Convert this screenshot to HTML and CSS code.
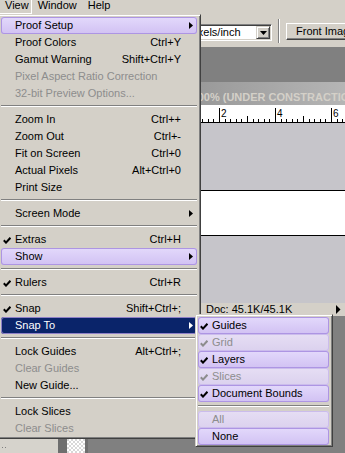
FILE: index.html
```html
<!DOCTYPE html>
<html lang="en">
<head>
  <meta charset="UTF-8" />
  <title>View menu – Snap To</title>
  <link rel="stylesheet" href="styles.css">
</head>
<body>
<div class="screen">

  <!-- ----------  MENU BAR  ---------- -->
  <div class="menubar">
    <span class="mb-item pressed">View</span>
    <span class="mb-item">Window</span>
    <span class="mb-item">Help</span>
  </div>

  <!-- ----------  OPTIONS BAR  ---------- -->
  <div class="options">
    <div class="field">
      <span class="field-text">Pixels/inch</span>
      <span class="drop"><svg width="7" height="4" viewBox="0 0 7 4"><polygon points="0,0 7,0 3.5,4" fill="#000"/></svg></span>
    </div>
    <div class="vsep"></div>
    <div class="btn">Front Image</div>
  </div>

  <!-- ----------  WORKSPACE + DOCUMENT  ---------- -->
  <div class="workspace">
    <div class="docwin">
      <div class="title">Untitled-1 @ 100% (UNDER CONSTRACTION, RGB/8)</div>
      <svg class="ruler" width="260" height="18" viewBox="0 0 260 18">
        <path stroke="#000" stroke-width="1" fill="none" shape-rendering="crispEdges"
          d="M0 17.5H260
             M43.5 3v14 M49.5 14v3 M54.5 14v3 M60.5 14v3 M65.5 14v3
             M71.5 11v6 M77.5 14v3 M82.5 14v3 M88.5 14v3 M93.5 14v3
             M99.5 3v14 M105.5 14v3 M110.5 14v3 M116.5 14v3 M121.5 14v3
             M127.5 11v6 M133.5 14v3 M138.5 14v3 M144.5 14v3 M149.5 14v3
             M155.5 3v14 M161.5 14v3 M166.5 14v3 M172.5 14v3 M177.5 14v3
             M183.5 11v6 M189.5 14v3 M194.5 14v3 M200.5 14v3 M205.5 14v3
             M211.5 3v14 M217.5 14v3 M222.5 14v3 M228.5 14v3 M233.5 14v3
             M239.5 11v6 M245.5 14v3 M250.5 14v3 M256.5 14v3"/>
        <text x="101" y="11.5">2</text>
        <text x="157" y="11.5">4</text>
        <text x="213" y="11.5">6</text>
      </svg>
      <div class="canvas"><div class="image"></div></div>
      <div class="status">
        <span class="zoomf"></span>
        <span class="docinfo">Doc: 45.1K/45.1K</span>
        <span class="docarrow"><svg width="5" height="9" viewBox="0 0 5 9"><polygon points="0,0 4.5,4.5 0,9" fill="#000"/></svg></span>
      </div>
    </div>

    <div class="toolbox"><span class="grip"></span></div>
    <div class="navwin"><span class="checker"></span></div>
  </div>

  <!-- ----------  VIEW MENU  ---------- -->
  <div class="menu main-menu">
    <div class="mi hl"><span class="gut"></span>Proof Setup<svg class="arr" width="4" height="7" viewBox="0 0 4 7"><polygon points="0,0 4,3.5 0,7"/></svg></div>
    <div class="mi"><span class="gut"></span>Proof Colors<span class="key">Ctrl+Y</span></div>
    <div class="mi"><span class="gut"></span>Gamut Warning<span class="key">Shift+Ctrl+Y</span></div>
    <div class="mi dis"><span class="gut"></span>Pixel Aspect Ratio Correction</div>
    <div class="mi dis"><span class="gut"></span>32-bit Preview Options...</div>
    <div class="sep"></div>
    <div class="mi"><span class="gut"></span>Zoom In<span class="key">Ctrl++</span></div>
    <div class="mi"><span class="gut"></span>Zoom Out<span class="key">Ctrl+-</span></div>
    <div class="mi"><span class="gut"></span>Fit on Screen<span class="key">Ctrl+0</span></div>
    <div class="mi"><span class="gut"></span>Actual Pixels<span class="key">Alt+Ctrl+0</span></div>
    <div class="mi"><span class="gut"></span>Print Size</div>
    <div class="sep"></div>
    <div class="mi"><span class="gut"></span>Screen Mode<svg class="arr" width="4" height="7" viewBox="0 0 4 7"><polygon points="0,0 4,3.5 0,7"/></svg></div>
    <div class="sep"></div>
    <div class="mi"><span class="gut"><svg class="ck" width="8" height="7" viewBox="0 0 8 7"><path d="M0.8 3.2 L3 5.6 L7.4 0.8"/></svg></span>Extras<span class="key">Ctrl+H</span></div>
    <div class="mi hl"><span class="gut"></span>Show<svg class="arr" width="4" height="7" viewBox="0 0 4 7"><polygon points="0,0 4,3.5 0,7"/></svg></div>
    <div class="sep"></div>
    <div class="mi"><span class="gut"><svg class="ck" width="8" height="7" viewBox="0 0 8 7"><path d="M0.8 3.2 L3 5.6 L7.4 0.8"/></svg></span>Rulers<span class="key">Ctrl+R</span></div>
    <div class="sep"></div>
    <div class="mi"><span class="gut"><svg class="ck" width="8" height="7" viewBox="0 0 8 7"><path d="M0.8 3.2 L3 5.6 L7.4 0.8"/></svg></span>Snap<span class="key">Shift+Ctrl+;</span></div>
    <div class="mi sel"><span class="gut"></span>Snap To<svg class="arr" width="4" height="7" viewBox="0 0 4 7"><polygon points="0,0 4,3.5 0,7"/></svg></div>
    <div class="sep"></div>
    <div class="mi"><span class="gut"></span>Lock Guides<span class="key">Alt+Ctrl+;</span></div>
    <div class="mi dis"><span class="gut"></span>Clear Guides</div>
    <div class="mi"><span class="gut"></span>New Guide...</div>
    <div class="sep"></div>
    <div class="mi"><span class="gut"></span>Lock Slices</div>
    <div class="mi dis"><span class="gut"></span>Clear Slices</div>
  </div>

  <!-- ----------  SNAP TO SUBMENU  ---------- -->
  <div class="menu sub-menu">
    <div class="mi hl"><span class="gut"><svg class="ck" width="8" height="7" viewBox="0 0 8 7"><path d="M0.8 3.2 L3 5.6 L7.4 0.8"/></svg></span>Guides</div>
    <div class="mi hl dis"><span class="gut"><svg class="ck" width="8" height="7" viewBox="0 0 8 7"><path d="M0.8 3.2 L3 5.6 L7.4 0.8"/></svg></span>Grid</div>
    <div class="mi hl"><span class="gut"><svg class="ck" width="8" height="7" viewBox="0 0 8 7"><path d="M0.8 3.2 L3 5.6 L7.4 0.8"/></svg></span>Layers</div>
    <div class="mi hl dis"><span class="gut"><svg class="ck" width="8" height="7" viewBox="0 0 8 7"><path d="M0.8 3.2 L3 5.6 L7.4 0.8"/></svg></span>Slices</div>
    <div class="mi hl"><span class="gut"><svg class="ck" width="8" height="7" viewBox="0 0 8 7"><path d="M0.8 3.2 L3 5.6 L7.4 0.8"/></svg></span>Document Bounds</div>
    <div class="sep"></div>
    <div class="mi hl dis"><span class="gut"></span>All</div>
    <div class="mi hl"><span class="gut"></span>None</div>
  </div>

</div>
</body>
</html>
```

FILE: styles.css
```css
/* —————— RESET —————— */
*{margin:0;padding:0;box-sizing:border-box;}

body{
  width:345px;
  height:453px;
  overflow:hidden;
  background:#808080;
  font:11px "Liberation Sans",Arial,sans-serif;
  color:#000;
}
.screen{position:relative;width:345px;height:453px;overflow:hidden;}

/* —————— MENU BAR —————— */
.menubar{height:15px;background:#d4d0c8;display:flex;}
.mb-item{height:14px;line-height:11px;padding:0 5px 2px 6px;white-space:nowrap;}
.mb-item.pressed{
  padding:0 2px 2px 5px;
  border-right:1px solid #fff;
  border-bottom:1px solid #fff;
}

/* —————— OPTIONS BAR —————— */
.options{
  height:32px;
  background:#d4d0c8;
  display:flex;
  align-items:flex-start;
  padding-left:184px;
}
.field{
  margin-top:9px;
  width:88px;
  height:17px;
  flex:none;
  display:flex;
  padding:1px;
  background:#fff;
  border:1px solid;
  border-color:#808080 #fff #fff #808080;
  box-shadow:inset 1px 1px #404040,inset -1px -1px #d4d0c8;
}
.field-text{flex:1;line-height:13px;padding-left:2px;white-space:nowrap;}
.drop{
  width:14px;
  height:13px;
  display:flex;
  align-items:center;
  justify-content:center;
  background:#d4d0c8;
  border:1px solid;
  border-color:#d4d0c8 #404040 #404040 #d4d0c8;
  box-shadow:inset 1px 1px #fff,inset -1px -1px #808080;
}
.vsep{
  margin:4px 0 0 6px;
  width:2px;
  height:24px;
  flex:none;
  border-left:1px solid #808080;
  border-right:1px solid #fff;
}
.btn{
  margin:8px 0 0 6px;
  width:100px;
  height:17px;
  flex:none;
  padding-left:9px;
  line-height:15px;
  white-space:nowrap;
  border:1px solid;
  border-color:#fff #404040 #404040 #fff;
  box-shadow:inset -1px -1px #808080;
}

/* —————— WORKSPACE + DOCUMENT —————— */
.workspace{position:relative;height:406px;background:#808080;}

.docwin{
  position:absolute;
  left:120px;
  top:35px;
  width:260px;
  height:234px;
  display:flex;
  flex-direction:column;
}
.title{
  height:23px;
  padding:7px 0 0 4px;
  line-height:16px;
  font-weight:bold;
  color:#d4d0c8;
  white-space:nowrap;
  overflow:hidden;
  background:linear-gradient(90deg,#8a8a8a,#bcbcbc);
}
.ruler{display:block;background:#fff;flex:none;}
.ruler text{font:10px "Liberation Sans",Arial,sans-serif;fill:#000;}
.canvas{height:180px;background:#c6c5ca;padding-top:67px;}
.image{margin-left:40px;height:46px;background:#fff;border:1px solid #000;border-right:none;}

.status{height:13px;display:flex;line-height:13px;background:#d4d0c8;white-space:nowrap;}
.zoomf{width:82px;flex:none;}
.docinfo{width:130px;flex:none;padding-left:4px;}
.docarrow{width:12px;flex:none;display:flex;align-items:center;padding-left:4px;}

.toolbox{position:absolute;left:0;top:390px;width:58px;height:16px;background:#d6d3cc;}
.grip{
  display:block;
  width:5px;
  height:1px;
  margin:10px 0 0 2px;
  background:repeating-linear-gradient(90deg,#808080 0 1px,transparent 1px 3px);
}
.navwin{position:absolute;left:58px;top:390px;width:30px;height:16px;background:#6e6e6e;padding:0 3px 0 9px;}
.checker{
  display:block;
  height:100%;
  background:#fff repeating-conic-gradient(#d8d8d8 0 25%,#fff 0 50%) 0 0/4px 4px;
}

/* —————— MENUS —————— */
.menu{
  position:absolute;
  background:#d4d0c8;
  border:1px solid;
  border-color:#d4d0c8 #404040 #404040 #d4d0c8;
  box-shadow:inset 1px 1px #fff,inset -1px -1px #808080;
  padding:2px 3px 1px 2px;
}
.main-menu{left:-2px;top:14px;width:203px;}
.sub-menu{left:195px;top:314px;width:138px;height:133px;}

.mi{
  height:17px;
  display:flex;
  align-items:center;
  padding-left:2px;
  line-height:17px;
  white-space:nowrap;
}
.gut{width:12px;height:17px;flex:none;display:flex;align-items:center;padding-top:2px;}
.ck path{fill:none;stroke:#000;stroke-width:2;}
.key{margin-left:auto;padding-right:16px;}
.arr{margin-left:auto;margin-right:4px;flex:none;fill:#000;}

.dis{color:#8d8d8d;}
.dis .ck path{stroke:#8d8d8d;}

.hl{
  border-radius:3px;
  background:linear-gradient(#e3d9fb,#d1c1f3);
  box-shadow:inset 0 0 0 1px #ad95e3;
}
.hl.dis{
  background:linear-gradient(#e6def4,#dbd1ee);
  box-shadow:inset 0 0 0 1px #cbbcec;
}
.sel{
  border-radius:3px;
  background:#0a246a;
  color:#fff;
  box-shadow:inset 0 0 0 1px #8e80c8;
}
.sel .arr{fill:#fff;}

.sep{height:9px;padding-top:3px;}
.sep::before{content:"";display:block;border-top:1px solid #808080;border-bottom:1px solid #fff;}
```
